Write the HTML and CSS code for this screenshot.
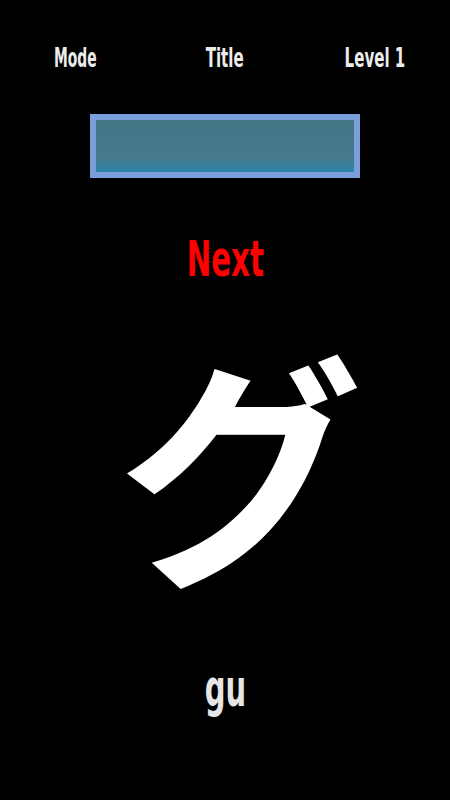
FILE: index.html
```html
<!DOCTYPE html>
<html lang="ja">
<head>
<meta charset="utf-8">
<title>Kana</title>
<link rel="stylesheet" href="styles.css">
</head>
<body>
<div class="screen">
  <header class="topbar">
    <span class="top-item"><span class="squeeze mode">Mode</span></span>
    <span class="top-item"><span class="squeeze">Title</span></span>
    <span class="top-item"><span class="squeeze">Level 1</span></span>
  </header>
  <div class="progress"><div class="progress-fill"></div></div>
  <div class="next"><span class="squeeze">Next</span></div>
  <div class="kana">グ</div>
  <div class="romaji"><span class="squeeze">gu</span></div>
</div>
</body>
</html>
```

FILE: styles.css
```css
html, body {
  margin: 0;
  padding: 0;
  background: #000;
}
.screen {
  width: 450px;
  height: 800px;
  display: flex;
  flex-direction: column;
  align-items: center;
  font-family: "DejaVu Sans Condensed", "DejaVu Sans", sans-serif;
  font-weight: bold;
}
.squeeze {
  display: inline-block;
  transform: scaleX(0.62);
}
.squeeze.mode {
  transform: scaleX(0.57);
}
.topbar {
  align-self: stretch;
  display: grid;
  grid-template-columns: 150px 150px 150px;
  margin-top: 42px;
  color: #ececec;
  font-size: 27px;
  line-height: 32px;
}
.top-item {
  text-align: center;
}
.progress {
  margin-top: 40px;
  width: 258px;
  height: 52px;
  border: 6px solid #7b9fdb;
  background: linear-gradient(#437585 0%, #457a8c 75%, #2b86a9 100%);
}
.progress-fill {
  height: 100%;
}
.next {
  margin-top: 51px;
  color: #ff0000;
  font-size: 50px;
  line-height: 60px;
}
.next .squeeze {
  transform: scaleX(0.65);
}
.kana {
  margin-top: 32px;
  padding-left: 30px;
  color: #fff;
  font-family: "Noto Sans CJK JP", sans-serif;
  font-weight: bold;
  font-size: 245px;
  line-height: 280px;
}
.romaji {
  margin-top: 57px;
  color: #e6e6e6;
  font-size: 52px;
  line-height: 60px;
}
```
